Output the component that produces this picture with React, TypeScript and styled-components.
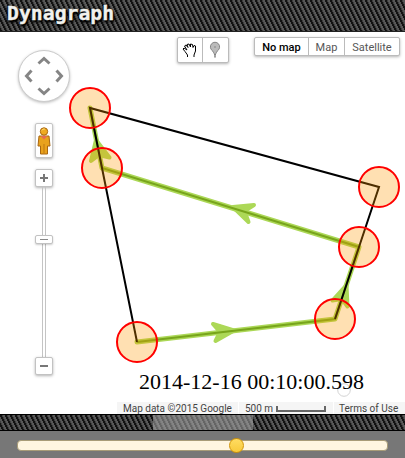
import React from 'react';
import styled, { createGlobalStyle, css } from 'styled-components';

const GlobalStyle = createGlobalStyle`
  * { box-sizing: border-box; }
  html, body { margin: 0; overflow: hidden; background: #fff; }
`;

const hatchTile = encodeURIComponent(
  '<svg xmlns="http://www.w3.org/2000/svg" width="5" height="10" shape-rendering="crispEdges">' +
    '<path fill="#585858" d="M0 0h5v10H0z"/>' +
    '<path fill="#3e3e3e" d="M2 0h1v2H2zM3 2h1v2H3zM4 4h1v2H4zM0 6h1v2H0zM1 8h1v2H1z"/>' +
    '<path fill="#121212" d="M0 0h2v2H0zM1 2h2v2H1zM2 4h2v2H2zM3 6h2v2H3zM4 8h1v2H4zM0 8h1v2H0z"/>' +
  '</svg>',
);

const hatch = css`
  background: #444 url("data:image/svg+xml,${hatchTile}");
`;

const Page = styled.div`
  display: flex;
  flex-direction: column;
  width: 405px;
  height: 458px;
  font-family: Roboto, sans-serif;
`;

const Header = styled.header`
  ${hatch}
  height: 32px;
  padding-left: 7px;
  border-bottom: 1px solid #222;
`;

const Title = styled.h1`
  margin: 0;
  font: bold 19.8px/27px 'DejaVu Sans Mono', monospace;
  color: #f1f1ed;
  -webkit-text-stroke: 0.4px #f1f1ed;
  text-shadow: 1px 1px 1px #000, -1px 0 2px #000, 0 2px 3px #000, 1px 2px 2px #000;
`;

const MapArea = styled.main`
  position: relative;
  flex: 1;
  overflow: hidden;
  background: #fff;
`;

const Graph = styled.svg`
  position: absolute;
  inset: 0;
  display: block;
`;

const Navigation = styled.div`
  position: absolute;
  left: 18px;
  top: 18px;
  width: 52px;
  display: flex;
  flex-direction: column;
  align-items: center;
`;

const PanWheel = styled.div`
  width: 52px;
  height: 52px;
  border: 1px solid #ccc;
  border-radius: 50%;
  background: #fff;
  box-shadow: 0 1px 3px rgba(0, 0, 0, 0.25);
  svg { display: block; }
`;

const Pegman = styled.div`
  width: 18px;
  height: 35px;
  margin: 21px 0 11px;
  border: 1px solid #c6c6c6;
  border-radius: 2px;
  background: #fff;
  box-shadow: 0 1px 3px rgba(0, 0, 0, 0.3);
  svg { display: block; }
`;

const ZoomButton = styled.div`
  width: 18px;
  height: 18px;
  border: 1px solid #c2c2c2;
  border-radius: 2px;
  background: #fff;
  box-shadow: 0 1px 3px rgba(0, 0, 0, 0.3);
  svg { display: block; }
`;

const ZoomTrack = styled.div`
  display: flex;
  flex-direction: column;
  align-items: center;
  justify-content: center;
  width: 4px;
  height: 170px;
  border: solid #c4c4c4;
  border-width: 0 1px;
`;

const ZoomThumb = styled.div`
  flex: none;
  width: 18px;
  height: 9px;
  margin-bottom: 66px;
  border: 1px solid #c2c2c2;
  border-radius: 2px;
  background: linear-gradient(#888, #888) center / 8px 1px no-repeat, #fff;
  box-shadow: 0 1px 2px rgba(0, 0, 0, 0.2);
`;

const ButtonGroup = styled.div<{ $left: number; $height: number }>`
  position: absolute;
  left: ${(p) => p.$left}px;
  top: 5px;
  height: ${(p) => p.$height}px;
  display: flex;
  border: 1px solid #bbb;
  border-radius: 2px;
  background: #fff;
  box-shadow: 0 1px 3px rgba(0, 0, 0, 0.3);
`;

const ToolButton = styled.div<{ $width: number }>`
  width: ${(p) => p.$width}px;
  & + & { border-left: 1px solid #bbb; }
  svg { display: block; }
`;

const MapType = styled.div<{ $active?: boolean; $width: number }>`
  width: ${(p) => p.$width}px;
  font-size: 11px;
  line-height: 19px;
  text-align: center;
  white-space: nowrap;
  color: ${(p) => (p.$active ? '#000' : '#565656')};
  font-weight: ${(p) => (p.$active ? 500 : 400)};
  & + & { border-left: 1px solid #bbb; }
`;

const Clock = styled.div`
  position: absolute;
  left: 139px;
  top: 337px;
  font: 22px/25px 'Liberation Serif', serif;
  white-space: nowrap;
  color: #000;
`;

const Attribution = styled.div`
  position: absolute;
  left: 117px;
  right: 0;
  bottom: 0;
  height: 12px;
  display: flex;
  gap: 1px;
  font-size: 10px;
  line-height: 13px;
  color: #444;
  white-space: nowrap;
`;

const Credit = styled.div<{ $width: number }>`
  display: flex;
  width: ${(p) => p.$width}px;
  padding-left: ${(p) => (p.$width < 80 ? 5 : 6)}px;
  background: #f5f5f5;
`;

const ScaleBar = styled.div`
  width: 50px;
  height: 6px;
  margin: 4px 0 0 3px;
  border: 2px solid #666;
  border-top: 0;
`;

const ScrollTrack = styled.div`
  ${hatch}
  height: 17px;
  border: solid #000;
  border-width: 1px 0;
`;

const ScrollThumb = styled.div`
  width: 100px;
  height: 15px;
  margin-left: 153px;
  background: rgba(170, 170, 170, 0.55);
`;

const Footer = styled.footer`
  display: flex;
  align-items: center;
  height: 27px;
  padding: 2px 17px 0;
  background: #777;
`;

const TimeTrack = styled.div`
  display: flex;
  align-items: center;
  width: 371px;
  height: 11px;
  border: 1px solid #a89c78;
  border-radius: 4px;
  background: #fff6e1;
`;

const TimeHandle = styled.div`
  width: 15px;
  height: 15px;
  margin-left: 211px;
  border: 1px solid #d19405;
  border-radius: 50%;
  background: linear-gradient(#ffdc62, #f8ca3b);
`;

type Point = [number, number];

const nodes: Point[] = [[90, 108], [102, 168], [137, 342], [335, 319], [359, 247], [379, 187]];
const route: Point[] = [[137, 342], [335, 319], [359, 247], [102, 168], [90, 108]];
const arrows = [
  'M234 330.5L213 324L220 332L215.5 341Z',
  'M346.5 285L332.5 300.5L342 299L347.5 306.5Z',
  'M233 207L254 205L244.5 211L248.5 222Z',
  'M96 140L91 161L99 155L109.5 157.5Z',
];
const toPoints = (points: Point[]) => points.map((p) => p.join(',')).join(' ');

export default function App() {
  return (
    <>
      <GlobalStyle />
      <Page>
        <Header>
          <Title>Dynagraph</Title>
        </Header>
        <MapArea>
          <Graph width="405" height="382" viewBox="0 32 405 382">
            <g fill="none" stroke="#acd857" strokeLinecap="round" strokeLinejoin="round">
              <polyline points={toPoints(route)} strokeWidth="5" />
              {arrows.map((d) => <path key={d} d={d} fill="#acd857" strokeWidth="4" />)}
            </g>
            <polyline points={toPoints(route)} fill="none" stroke="#78a51c" strokeWidth="2" />
            <polyline
              points="137,342 102,168 90,108 379,187 359,247 335,319"
              fill="none"
              stroke="#000"
              strokeWidth="2"
            />
            <g fill="#ff9900" fillOpacity="0.3" stroke="#f00" strokeWidth="2">
              {nodes.map(([x, y]) => <circle key={y} cx={x} cy={y} r="20" />)}
            </g>
            <circle cx="344" cy="390" r="6.3" fill="none" stroke="#d4d4d4" />
          </Graph>
          <Navigation>
            <PanWheel>
              <svg width="50" height="50" viewBox="0 0 50 50" fill="none" stroke="#858585" strokeWidth="3">
                <path d="M19.5 12.5l5.5-5 5.5 5M19.5 37.5l5.5 5 5.5-5M12.5 19.5l-5 5.5 5 5.5M37.5 19.5l5 5.5-5 5.5" />
              </svg>
            </PanWheel>
            <Pegman>
              <svg width="16" height="33" viewBox="0 0 16 33">
                <path d="M3 12h10l1 10h-2.5v8h-7v-8H2z" fill="#e9a21d" stroke="#a96712" />
                <path d="M4.5 12h7L8 15.5z" fill="#e76a55" />
                <path d="M8 20v9" stroke="#bf7812" />
                <circle cx="8" cy="7.5" r="3.7" fill="#efaa22" stroke="#a96712" />
                <path d="M5.8 6.5q1-2 3-1.5" fill="none" stroke="#ffe079" />
              </svg>
            </Pegman>
            <ZoomButton>
              <svg width="16" height="16" stroke="#777" strokeWidth="2"><path d="M4 8h8M8 4v8" /></svg>
            </ZoomButton>
            <ZoomTrack><ZoomThumb /></ZoomTrack>
            <ZoomButton>
              <svg width="16" height="16" stroke="#777" strokeWidth="2"><path d="M4 8h8" /></svg>
            </ZoomButton>
          </Navigation>
          <ButtonGroup $left={177} $height={26}>
            <ToolButton $width={24}>
              <svg width="24" height="24" viewBox="0 0 24 24">
                <path d="M9.5 19v-2L7 13.5l-2-2.5 1-1 3 2-2.5-4 1.5-1 2 2.5-1-3 2-.5 1.5 3V6l2 .5.5 3 1-2 1.5.5v5l-1.5 4v2" fill="#fff" stroke="#000" />
              </svg>
            </ToolButton>
            <ToolButton $width={26}>
              <svg width="25" height="24" viewBox="0 0 25 24">
                <path d="M12 19.5c0-3-1-4.5-2.8-7a4.6 4.6 0 1 1 5.6 0c-1.8 2.5-2.8 4-2.8 7z" fill="#bbb" stroke="#858585" />
                <circle cx="12" cy="9" r="1" fill="#999" />
              </svg>
            </ToolButton>
          </ButtonGroup>
          <ButtonGroup $left={254} $height={19}>
            <MapType $width={53} $active>No map</MapType>
            <MapType $width={36}>Map</MapType>
            <MapType $width={55}>Satellite</MapType>
          </ButtonGroup>
          <Clock>2014-12-16 00:10:00.598</Clock>
          <Attribution>
            <Credit $width={121}>Map data ©2015 Google</Credit>
            <Credit $width={94}>500 m<ScaleBar /></Credit>
            <Credit $width={71}>Terms of Use</Credit>
          </Attribution>
        </MapArea>
        <ScrollTrack><ScrollThumb /></ScrollTrack>
        <Footer>
          <TimeTrack><TimeHandle /></TimeTrack>
        </Footer>
      </Page>
    </>
  );
}
